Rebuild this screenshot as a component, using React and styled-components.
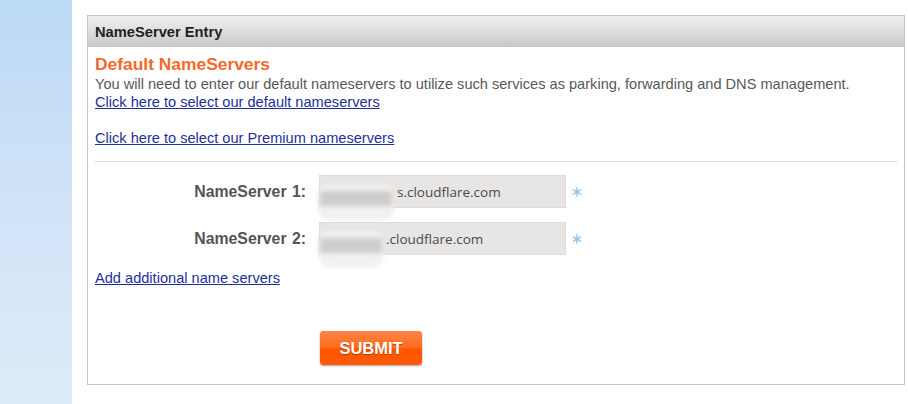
import React from 'react';
import styled, { createGlobalStyle } from 'styled-components';

const GlobalStyle = createGlobalStyle`
  body {
    margin: 0;
    background: #fff;
    font-family: "Liberation Sans", Arial, sans-serif;
  }
`;

const Page = styled.div`
  display: flex;
  width: 908px;
  height: 404px;
  overflow: hidden;
`;

const Sidebar = styled.div`
  width: 72px;
  flex: none;
  background: linear-gradient(to bottom, #bcdaf5 0%, #d0e3f7 50%, #deebf9 100%);
`;

const Main = styled.div`
  flex: 1;
  padding: 15px 3px 0 15px;
`;

const Panel = styled.div`
  border: 1px solid #c8c8c8;
  height: 370px;
  box-sizing: border-box;
  background: #fff;
`;

const PanelHeader = styled.div`
  height: 31px;
  display: flex;
  align-items: center;
  padding-left: 7px;
  background: linear-gradient(to bottom, #efefef 0%, #dedede 50%, #c6c6c6 100%);
  font-size: 14.7px;
  font-weight: bold;
  color: #222;
`;

const PanelBody = styled.div`
  padding: 6px 7px 0 7px;
`;

const Title = styled.h2`
  margin: 0;
  font-size: 17.4px;
  line-height: 22px;
  font-weight: bold;
  color: #f26a2a;
`;

const Text = styled.p`
  margin: 0;
  font-size: 14.6px;
  line-height: 18px;
  color: #585858;
`;

const Link = styled.a`
  display: ${p => (p.block ? 'block' : 'inline')};
  font-size: 14.6px;
  line-height: 18px;
  color: #1d2f9c;
  text-decoration: underline;
  margin-top: ${p => p.gap || 0}px;
`;

const Rule = styled.hr`
  border: none;
  border-top: 1px solid #dcdcdc;
  margin: 14px 0 13px 0;
`;

const Row = styled.div`
  display: grid;
  grid-template-columns: 211px 247px auto;
  column-gap: 13px;
  align-items: center;
  margin-bottom: 14px;
`;

const Label = styled.label`
  text-align: right;
  font-size: 15.8px;
  word-spacing: 1px;
  font-weight: bold;
  color: #555;
`;

const Field = styled.div`
  position: relative;
  height: 33px;
  box-sizing: border-box;
  background: #e8e6e4;
  border: 1px solid #dedcda;
  display: flex;
  align-items: center;
  padding-left: ${p => p.indent}px;
  font-family: "Open Sans", "DejaVu Sans", sans-serif;
  font-size: 13.5px;
  color: #4a4a4a;
`;

const Blur = styled.span`
  position: absolute;
  left: -2px;
  top: 8px;
  width: ${p => p.w}px;
  height: 36px;
  border-radius: 12px;
  background: #f2f1f0;
  filter: blur(2px);
  &::after {
    content: "";
    position: absolute;
    left: 2px;
    top: 7px;
    width: ${p => p.w - 4}px;
    height: 15px;
    background: #cfcdcc;
    filter: blur(1px);
  }
`;

const Star = styled.svg`
  width: 10px;
  height: 10px;
  margin-left: -7px;
`;

const ButtonRow = styled.div`
  padding: 44px 0 0 225px;
`;

const Submit = styled.button`
  width: 102px;
  height: 34px;
  border: none;
  border-radius: 3px;
  background: linear-gradient(to bottom, #ff8547 0%, #ff6a1c 50%, #ff5600 52%, #ff5a08 100%);
  box-shadow: 0 1px 2px rgba(0, 0, 0, 0.35);
  color: #fff;
  font-family: "Liberation Sans", Arial, sans-serif;
  font-size: 16.5px;
  font-weight: bold;
  text-shadow: 0 1px 1px rgba(120, 40, 0, 0.6);
  cursor: pointer;
`;

const Asterisk = () => (
  <Star viewBox="0 0 10 10">
    <g stroke="#8ec3ec" strokeWidth="1.4" strokeLinecap="round">
      <line x1="5" y1="0.8" x2="5" y2="9.2" />
      <line x1="1.4" y1="2.9" x2="8.6" y2="7.1" />
      <line x1="1.4" y1="7.1" x2="8.6" y2="2.9" />
    </g>
  </Star>
);

const servers = [
  { label: 'NameServer 1:', value: 's.cloudflare.com', indent: 77, blur: 76 },
  { label: 'NameServer 2:', value: '.cloudflare.com', indent: 66, blur: 66 },
];

export default function App() {
  return (
    <>
      <GlobalStyle />
      <Page>
        <Sidebar />
        <Main>
          <Panel>
            <PanelHeader>NameServer Entry</PanelHeader>
            <PanelBody>
              <Title>Default NameServers</Title>
              <Text>
                You will need to enter our default nameservers to utilize such services as parking,
                forwarding and DNS management.
              </Text>
              <Link block href="#">Click here to select our default nameservers</Link>
              <Link block gap={18} href="#">Click here to select our Premium nameservers</Link>
              <Rule />
              {servers.map(s => (
                <Row key={s.label}>
                  <Label>{s.label}</Label>
                  <Field indent={s.indent}>
                    <Blur w={s.blur} />
                    {s.value}
                  </Field>
                  <Asterisk />
                </Row>
              ))}
              <Link block href="#">Add additional name servers</Link>
              <ButtonRow>
                <Submit>SUBMIT</Submit>
              </ButtonRow>
            </PanelBody>
          </Panel>
        </Main>
      </Page>
    </>
  );
}
